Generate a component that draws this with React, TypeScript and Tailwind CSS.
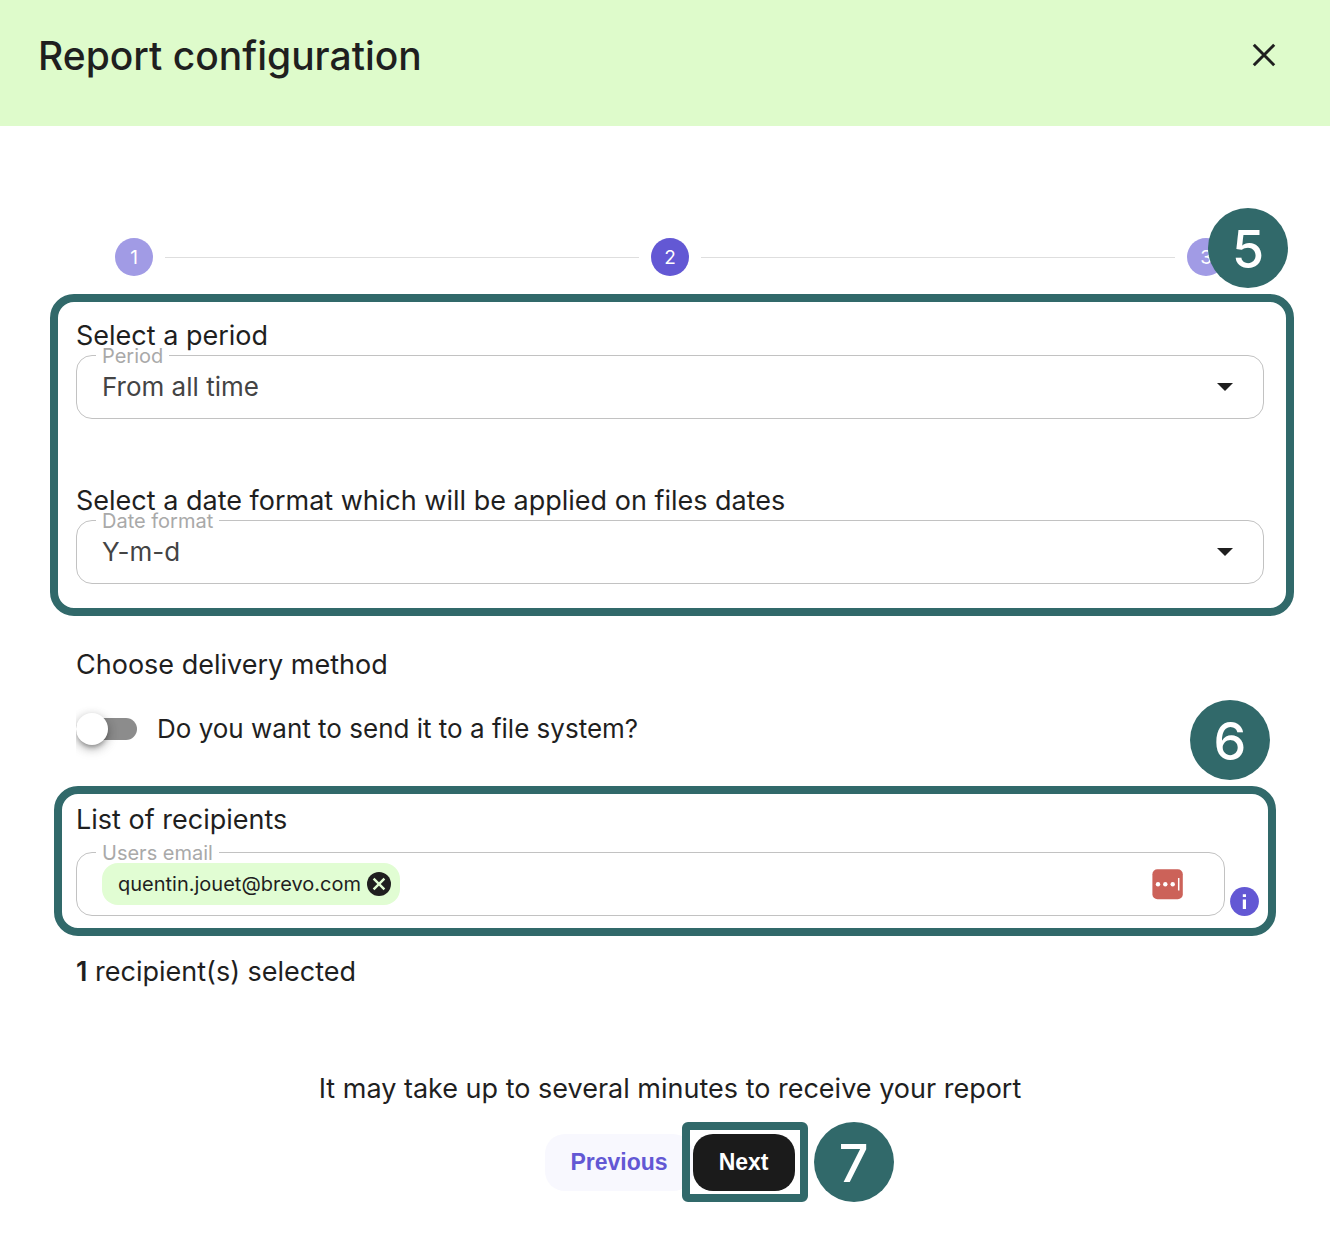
import React, { FC, ReactNode, useState } from "react";

type SelectFieldProps = {
  id: string;
  label: string;
  options: string[];
};

const Title: FC<{ children: ReactNode }> = ({ children }) => (
  <h2 className="text-[27px] leading-9">{children}</h2>
);

const Badge: FC<{ className: string; children: ReactNode }> = ({
  className,
  children,
}) => (
  <span
    className={`absolute flex h-20 w-20 items-center justify-center rounded-full bg-[#31696a] pt-1 text-[52px] font-medium text-white ${className}`}
  >
    {children}
  </span>
);

// the legend has no height, so the border runs through the middle of its text
const Field: FC<{ id: string; label: string; children: ReactNode }> = ({
  id,
  label,
  children,
}) => (
  <fieldset className="relative h-16 min-w-0 flex-1 rounded-2xl border border-[#c2c2c2]">
    <legend className="ml-[19px] h-0 px-1.5 text-[20px] leading-[0] text-[#a9a9a9]">
      <label htmlFor={id}>{label}</label>
    </legend>
    {children}
  </fieldset>
);

const SelectField: FC<SelectFieldProps> = ({ id, label, options }) => (
  <Field id={id} label={label}>
    <select
      id={id}
      className="h-full w-full appearance-none rounded-2xl bg-transparent pr-16 pb-0.5 pl-[25px] text-[26px] text-[#444] outline-none"
    >
      {options.map((option) => (
        <option key={option}>{option}</option>
      ))}
    </select>
    <svg
      viewBox="0 0 16 8"
      className="pointer-events-none absolute top-[27px] right-[30px] h-2 w-4 fill-[#1f1f1f]"
    >
      <path d="M0 0h16L8 8z" />
    </svg>
  </Field>
);

const Step: FC<{ active?: boolean; children: ReactNode }> = ({
  active,
  children,
}) => (
  <li
    className={`flex h-[38px] w-[38px] items-center justify-center rounded-full pt-0.5 text-[19px] text-white ${
      active ? "bg-[#6358d4]" : "bg-[#a19be5]"
    }`}
  >
    {children}
  </li>
);

export default function App() {
  const [fileSystem, setFileSystem] = useState(false);
  const [emails, setEmails] = useState(["quentin.jouet@brevo.com"]);

  return (
    <div className="min-h-screen bg-white font-['Inter',sans-serif] text-[#1f1f1f]">
      <header className="flex h-[126px] items-start justify-between bg-[#defbcb] pt-8 pr-[54px] pl-[38px]">
        <h1 className="text-[39px] leading-[48px] font-medium">
          Report configuration
        </h1>
        <button type="button" aria-label="Close" className="mt-[11px]">
          <svg viewBox="0 0 24 24" className="h-6 w-6">
            <path
              d="M1.8 1.8l20.4 20.4M22.2 1.8L1.8 22.2"
              stroke="#1f1f1f"
              strokeWidth="3"
            />
          </svg>
        </button>
      </header>

      <main className="pt-28 pr-[66px] pb-14 pl-[76px]">
        <ol className="flex items-center gap-3 px-[39px]">
          <Step>1</Step>
          <li aria-hidden className="h-px flex-1 bg-[#dedede]" />
          <Step active>2</Step>
          <li aria-hidden className="h-px flex-1 bg-[#dedede]" />
          <Step>3</Step>
        </ol>

        <section className="relative mt-[18px] -mr-[30px] -ml-[26px] rounded-3xl border-8 border-[#31696a] pt-4 pr-[22px] pb-6 pl-[18px]">
          <Badge className="-top-[94px] -right-0.5">5</Badge>
          <Title>Select a period</Title>
          <div className="mt-px flex">
            <SelectField
              id="period"
              label="Period"
              options={["From all time", "Last 30 days", "Last 7 days"]}
            />
          </div>
          <div className="mt-16">
            <Title>Select a date format which will be applied on files dates</Title>
          </div>
          <div className="mt-px flex">
            <SelectField
              id="date-format"
              label="Date format"
              options={["Y-m-d", "d-m-Y", "m-d-Y"]}
            />
          </div>
        </section>

        <div className="mt-[31px]">
          <Title>Choose delivery method</Title>
        </div>
        <label className="mt-7 flex items-center text-[26px] leading-9">
          <input
            type="checkbox"
            role="switch"
            className="sr-only"
            checked={fileSystem}
            onChange={() => setFileSystem(!fileSystem)}
          />
          <span className="mr-5 overflow-x-clip">
            <span
              className={`flex h-[22px] w-[61px] items-center rounded-full bg-[#8c8c8c] ${
                fileSystem ? "justify-end" : ""
              }`}
            >
              <span className="h-8 w-8 shrink-0 rounded-full bg-white shadow-[0_4px_4px_-2px_rgba(0,0,0,0.25),0_3px_10px_rgba(0,0,0,0.25),0_4px_14px_rgba(0,0,0,0.12)]" />
            </span>
          </span>
          Do you want to send it to a file system?
        </label>

        <section className="relative mt-[39px] -mr-3 -ml-[22px] rounded-3xl border-8 border-[#31696a] pt-2 pr-[9px] pb-3 pl-[14px]">
          <Badge className="-top-[94px] -right-0.5">6</Badge>
          <Title>List of recipients</Title>
          <div className="mt-[14px] flex items-end gap-[5px]">
            <Field id="users-email" label="Users email">
              <div className="flex h-full items-center pr-[41px] pl-[25px]">
                {emails.map((email) => (
                  <span
                    key={email}
                    className="flex h-[42px] items-center gap-1.5 rounded-2xl bg-[#e1fdd3] pr-[9px] pl-4 text-[20px]"
                  >
                    {email}
                    <button
                      type="button"
                      aria-label={`Remove ${email}`}
                      onClick={() => setEmails(emails.filter((e) => e !== email))}
                    >
                      <svg viewBox="0 0 24 24" className="h-6 w-6">
                        <circle cx="12" cy="12" r="12" fill="#1f1f1f" />
                        <path
                          d="M6.6 6.6l10.8 10.8M17.4 6.6L6.6 17.4"
                          stroke="#e1fdd3"
                          strokeWidth="2.4"
                        />
                      </svg>
                    </button>
                  </span>
                ))}
                <input
                  id="users-email"
                  type="email"
                  className="mx-2 h-10 min-w-0 flex-1 bg-transparent text-[20px] outline-none"
                />
                <button type="button" aria-label="Password manager">
                  <svg viewBox="0 0 31 31" className="h-[31px] w-[31px]">
                    <rect x="0.4" y="0.2" width="30.4" height="30" rx="5" fill="#cc6259" />
                    <circle cx="6" cy="15.2" r="2.2" fill="#fff" />
                    <circle cx="13.3" cy="15.2" r="2.2" fill="#fff" />
                    <circle cx="20.7" cy="15.2" r="2.2" fill="#fff" />
                    <path d="M26.7 9v12.5" stroke="#fff" strokeWidth="1.5" />
                  </svg>
                </button>
              </div>
            </Field>
            <button type="button" aria-label="Recipients help">
              <svg viewBox="0 0 29 29" className="h-[29px] w-[29px]">
                <circle cx="14.5" cy="14.5" r="14.4" fill="#6358d4" />
                <path
                  d="M12.8 7.3h3.2v2.8h-3.2zM12.8 12.4h3.2v9.6h-3.2z"
                  fill="#fff"
                />
              </svg>
            </button>
          </div>
        </section>

        <p className="mt-[18px] text-[27px] leading-9">
          <strong className="font-semibold">{emails.length}</strong> recipient(s)
          selected
        </p>

        <p className="mt-[81px] text-center text-[27px] leading-9">
          It may take up to several minutes to receive your report
        </p>
        <div className="mt-[27px] flex justify-center font-['Liberation_Sans',sans-serif] text-[23px] font-bold">
          <button
            type="button"
            className="h-[57px] rounded-[20px] bg-[#f8f8fe] px-[25px] text-[#6358d4]"
          >
            Previous
          </button>
          <div className="relative">
            <span className="pointer-events-none absolute -top-3 -left-[11px] h-20 w-[126px] rounded-md border-8 border-[#31696a]" />
            <button
              type="button"
              className="h-[57px] rounded-[20px] bg-[#1b1b1b] px-[26px] text-white"
            >
              Next
            </button>
            <Badge className="-top-3 left-[121px] font-['Inter',sans-serif]">7</Badge>
          </div>
        </div>
      </main>
    </div>
  );
}
